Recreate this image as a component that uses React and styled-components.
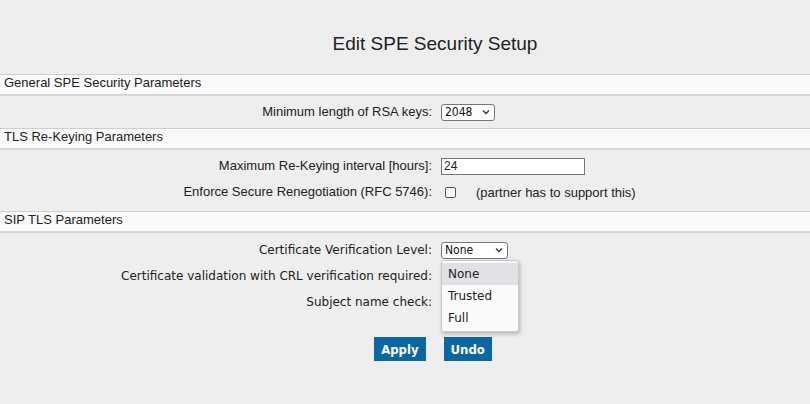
import React from 'react';
import styled, { createGlobalStyle } from 'styled-components';

const Global = createGlobalStyle`
  html, body { margin: 0; background: #eeeeee; }
  body { font-family: "Liberation Sans", Arial, sans-serif; color: #222; }
`;

const Page = styled.div`
  width: 810px;
  height: 404px;
  background: #eeeeee;
  padding-top: 33px;
  box-sizing: border-box;
`;

const Title = styled.h1`
  margin: 0 0 19px 60px;
  text-align: center;
  font: 19px "Liberation Sans", Arial, sans-serif;
  color: #222;
`;

const SectionHead = styled.div`
  background: #fafafa;
  border-top: 1px solid #cfcfcf;
  border-bottom: 2px solid #d6d6d6;
  height: 19px;
  line-height: 19px;
  padding-left: 4px;
  font: 13px "Liberation Sans", Arial, sans-serif;
`;

const Rows = styled.div`
  display: grid;
  grid-template-columns: 432px 1fr;
  column-gap: 9px;
  row-gap: ${p => p.$gap || 8}px;
  padding: ${p => p.$pad || '7px 0 8px'};
  align-items: center;
  font-size: ${p => p.$wide ? 12 : 13}px;
  font-family: ${p => p.$wide ? '"DejaVu Sans", Verdana, sans-serif' : '"Liberation Sans", Arial, sans-serif'};
`;

const Label = styled.div`
  text-align: right;
  height: 20px;
  line-height: 20px;
`;

const Cell = styled.div`
  display: flex;
  align-items: center;
  gap: 20px;
  height: 20px;
  position: relative;
`;

const Select = styled.div`
  display: inline-flex;
  align-items: center;
  justify-content: space-between;
  width: ${p => p.$w}px;
  height: 17px;
  box-sizing: border-box;
  border: 1px solid #767676;
  border-radius: 3px;
  background: #fff;
  padding: 0 4px 0 3px;
  font-size: 12px;
  font-family: "DejaVu Sans Condensed", sans-serif;
  color: #111;
`;

const Input = styled.div`
  width: 144px;
  height: 17px;
  box-sizing: border-box;
  border: 1px solid #767676;
  background: #fff;
  padding-left: 2px;
  line-height: 15px;
  font-size: 12px;
`;

const Check = styled.span`
  width: 11px;
  height: 11px;
  margin-left: 4px;
  border: 1px solid #555;
  border-radius: 2px;
  background: #fff;
  box-sizing: border-box;
`;

const Menu = styled.div`
  position: absolute;
  left: 0;
  top: 20px;
  width: 76px;
  background: #fafafa;
  border: 1px solid #c8c8c8;
  border-radius: 3px;
  box-shadow: 1px 2px 4px rgba(0,0,0,0.25);
  padding: 2px 0;
  z-index: 2;
`;

const Option = styled.div`
  height: 22px;
  line-height: 22px;
  padding-left: 6px;
  font-size: 12px;
  background: ${p => p.$active ? '#e0e0e5' : 'transparent'};
`;

const Buttons = styled.div`
  display: flex;
  justify-content: center;
  gap: 18px;
  padding-left: 56px;
  margin-top: 25px;
`;

const Button = styled.button`
  background: #0a67a3;
  color: #fff;
  border: none;
  height: 24px;
  padding: 0 7px;
  font: bold 13px "DejaVu Sans Condensed", Tahoma, sans-serif;
`;

const Chevron = () => (
  <svg width="8" height="6" viewBox="0 0 8 6"><path d="M1 1.5l3 3 3-3" fill="none" stroke="#333" strokeWidth="1.3" /></svg>
);

export default function App() {
  return (
    <Page>
      <Global />
      <Title>Edit SPE Security Setup</Title>
      <SectionHead>General SPE Security Parameters</SectionHead>
      <Rows $pad="6px 0 6px">
        <Label>Minimum length of RSA keys:</Label>
        <Cell><Select $w={54}>2048 <Chevron /></Select></Cell>
      </Rows>
      <SectionHead>TLS Re-Keying Parameters</SectionHead>
      <Rows $pad="6px 0 9px" $gap={6}>
        <Label>Maximum Re-Keying interval [hours]:</Label>
        <Cell><Input>24</Input></Cell>
        <Label>Enforce Secure Renegotiation (RFC 5746):</Label>
        <Cell><Check /><span>(partner has to support this)</span></Cell>
      </Rows>
      <SectionHead>SIP TLS Parameters</SectionHead>
      <Rows $wide $pad="7px 0 0" $gap={6}>
        <Label>Certificate Verification Level:</Label>
        <Cell>
          <Select $w={67}>None <Chevron /></Select>
          <Menu>
            <Option $active>None</Option>
            <Option>Trusted</Option>
            <Option>Full</Option>
          </Menu>
        </Cell>
        <Label>Certificate validation with CRL verification required:</Label>
        <Cell />
        <Label>Subject name check:</Label>
        <Cell />
      </Rows>
      <Buttons>
        <Button>Apply</Button>
        <Button>Undo</Button>
      </Buttons>
    </Page>
  );
}
